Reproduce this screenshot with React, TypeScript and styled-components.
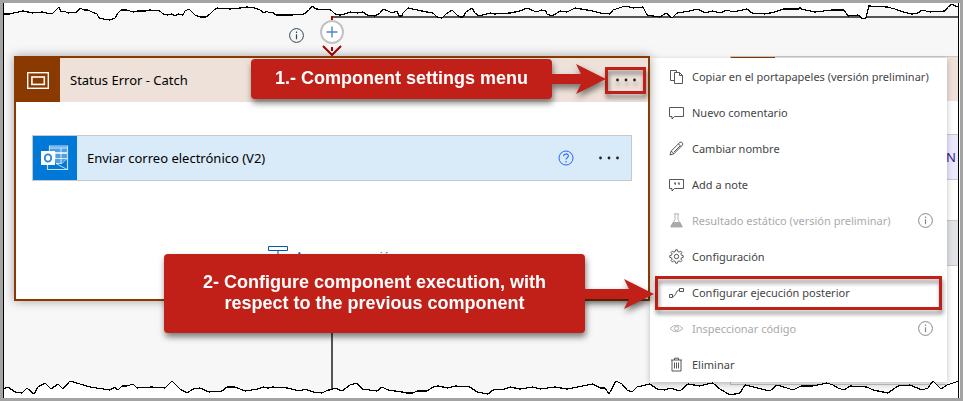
import React from "react";
import styled, { createGlobalStyle, css } from "styled-components";

const ui = `"Noto Sans", "Open Sans", "Liberation Sans", sans-serif`;
const red = "#c12018";
const brown = "#8a3a00";

const Global = createGlobalStyle`
  *, *::before, *::after { box-sizing: border-box; }
  body { margin: 0; font-family: ${ui}; font-size: 13px; color: #000; }
  button { font: inherit; color: inherit; background: none; border: 0; padding: 0; cursor: pointer; }
  svg { display: block; flex: none; }
`;

const Frame = styled.main`
  min-height: 100vh;
  display: flex;
  border: 3px solid #a3a3a3;
  padding-right: 1px;
  background: #fff;
`;

const Canvas = styled.div`
  position: relative;
  flex: 1;
  min-width: 0;
  display: flex;
  flex-direction: column;
  overflow: hidden;
  background: #f7f7f7;
  border: 0 solid #000;
  border-width: 0 1px;
`;

const TornEdge = styled.svg<{ $side: "top" | "bottom" }>`
  position: absolute;
  left: -1px;
  width: calc(100% + 2px);
  height: 20px;
  z-index: 5;
  pointer-events: none;
  ${(p) => (p.$side === "top" ? "top: 0;" : "bottom: 0;")}
`;

const Columns = styled.div`
  display: grid;
  grid-template-columns: 646fr 308fr;
`;

const TopStrip = styled(Columns)`
  height: 53px;
`;

const Inlet = styled.div`
  display: grid;
  grid-template-columns: 1fr 24px 1fr;
  column-gap: 16px;
  padding-left: 10px;
`;

const InfoButton = styled.button`
  justify-self: end;
  align-self: start;
  margin-top: 25px;
`;

const InletArrow = styled.div`
  position: relative;
  display: flex;
  flex-direction: column;
  align-items: center;
  padding-top: 13px;
  z-index: 2;
`;

const InletStub = styled.div`
  width: 2px;
  height: 4px;
  background: #a80000;
`;

const AddButton = styled.button`
  width: 24px;
  height: 24px;
  border: 2px solid #c3c3c3;
  border-radius: 50%;
  background: #fff;
  display: grid;
  place-items: center;
`;

const Wire = styled.div`
  align-self: start;
  height: 2px;
  margin-top: 13px;
  background: #555;
`;

const InletWire = styled(Wire)`
  margin: 13px 0 0 -28px;
`;

const ScopeColumn = styled.div`
  position: relative;
  z-index: 3;
  padding-left: 10px;
`;

const Scope = styled.section`
  position: relative;
  border: 2px solid ${brown};
  background: #fff;
  box-shadow: 0 0 10px rgba(0, 0, 0, 0.35);
`;

const ScopeHeader = styled.header`
  position: relative;
  display: flex;
  align-items: center;
  height: 44px;
  background: #eee1d9;
`;

const Tile = styled.span<{ $color: string }>`
  width: 44px;
  height: 44px;
  flex: none;
  display: grid;
  place-items: center;
  background: ${(p) => p.$color};
`;

const Title = styled.h2`
  flex: 1;
  margin: 0 10px;
  font-size: 13px;
  font-weight: 400;
  white-space: nowrap;
`;

const outlined = css`
  border: 3px solid ${red};
  filter: drop-shadow(1px 4px 2px rgba(0, 0, 0, 0.45));
`;

const MoreButton = styled.button<{ $outlined?: boolean }>`
  width: 41px;
  height: 27px;
  margin-right: 2px;
  display: grid;
  place-items: center;
  ${(p) => p.$outlined && outlined}
`;

const HelpButton = styled.button`
  margin-right: 14px;
`;

const ScopeBody = styled.div`
  padding: 33px 16px 0;
  height: 197px;
`;

const Action = styled.article`
  display: flex;
  align-items: center;
  height: 46px;
  border: 1px solid #c4c8cc;
  background: #d9eaf8;
`;

const AddAction = styled.button`
  display: flex;
  align-items: center;
  gap: 8px;
  height: 24px;
  margin: 62px auto 0;
  color: #0058ad;
  font-size: 11px;
`;

const Outlet = styled.div`
  width: 2px;
  height: 94px;
  margin: 0 auto;
  background: #555;
`;

const Callout = styled.div<{ $place: "header" | "body" }>`
  position: absolute;
  z-index: 4;
  display: flex;
  align-items: center;
  filter: drop-shadow(1px 4px 3px rgba(0, 0, 0, 0.5));
  ${(p) => (p.$place === "header" ? "top: 1px; right: 42px;" : "top: 196px; right: -6px;")}
`;

const CalloutText = styled.p<{ $wide?: boolean }>`
  margin: 0;
  padding: ${(p) => (p.$wide ? "18px 39px 19px" : "9px 24px 10px")};
  border-radius: 4px;
  background: ${red};
  color: #fff;
  font: 700 18px/21px "Liberation Sans", Arial, sans-serif;
  text-align: center;
  white-space: nowrap;
`;

const SideColumn = styled.div`
  position: relative;
`;

const BackCard = styled.section`
  margin-left: 80px;
  height: 329px;
  border: 1px solid #c8c8c8;
  border-right: 0;
  background: #fff;
`;

const BackHeader = styled.div`
  height: 44px;
  background: #eee1d9;
`;

const BackRow = styled.div<{ $color: string; $gap: number }>`
  height: 46px;
  margin-top: ${(p) => p.$gap}px;
  padding-right: 2px;
  border: 1px solid #c8c8c8;
  border-width: 1px 0;
  background: ${(p) => p.$color};
  color: #2c1d8c;
  line-height: 44px;
  text-align: right;
`;

const Menu = styled.ul`
  position: absolute;
  top: 2px;
  left: 0;
  right: 11px;
  z-index: 1;
  margin: 0;
  padding: 0;
  list-style: none;
  background: #fff;
  box-shadow: 0 2px 6px rgba(0, 0, 0, 0.25);
`;

const MenuItem = styled.li`
  position: relative;
`;

const MenuButton = styled.button`
  width: 100%;
  height: 36px;
  padding: 0 14px 0 19px;
  display: flex;
  align-items: center;
  gap: 8px;
  color: #444;
  font-size: 11px;
  text-align: left;
  white-space: nowrap;
  &:disabled {
    color: #aaa;
    cursor: default;
  }
`;

const MenuLabel = styled.span`
  flex: 1;
`;

const Highlight = styled.span`
  position: absolute;
  inset: 2px 5px 0 5px;
  pointer-events: none;
  ${outlined}
`;

const Info = ({ size = 15, color = "#888" }: { size?: number; color?: string }) => (
  <svg width={size} height={size} viewBox="0 0 15 15" fill="none" stroke={color}>
    <circle cx="7.5" cy="7.5" r="6.9" />
    <path d="M7.5 6.2v5M7.5 3.6v1.4" strokeWidth="1.2" />
  </svg>
);

const Dots = () => (
  <svg width="22" height="4" viewBox="0 0 22 4" fill="#222">
    <circle cx="2.5" cy="2" r="1.4" />
    <circle cx="11" cy="2" r="1.4" />
    <circle cx="19.5" cy="2" r="1.4" />
  </svg>
);

const ScopeIcon = () => (
  <svg width="22" height="17" viewBox="0 0 22 17" fill="none" stroke="#fff">
    <rect x=".7" y=".7" width="20.6" height="15.6" strokeWidth="1.4" />
    <rect x="4.9" y="5" width="12.4" height="7.4" strokeWidth="1.6" />
  </svg>
);

const OutlookIcon = () => (
  <svg width="28" height="26" viewBox="0 0 28 26" fill="none" stroke="#fff">
    <path d="M8.5 1h18v6.500h-18zM26.500 7v17.500h-20V18" strokeWidth="1.200" opacity=".75" />
    <path d="M9 3h17M14 7.500v6M20 3v15M9 8.500h17M14 13.500h12M15 18.500h6l5-5M15 18.500l11 6" opacity=".75" />
    <path d="M8.500 1.500h17.500v12l-6 4.500h-6z" fill="#fff" stroke="none" opacity=".3" />
    <rect x="0" y="6" width="14" height="14" fill="#fff" stroke="none" />
    <ellipse cx="7" cy="13" rx="3.200" ry="3.600" stroke="#2a88dc" strokeWidth="1.900" />
  </svg>
);

const Help = () => (
  <svg width="16" height="16" viewBox="0 0 16 16" fill="none" stroke="#2266ff">
    <circle cx="8" cy="8" r="7" />
    <path d="M5.700 6.200c0-3 4.700-3 4.700-.2 0 1.700-2.400 1.800-2.400 3.600M8 11v1.400" strokeWidth="1.100" />
  </svg>
);

const InsertIcon = () => (
  <svg width="20" height="18" viewBox="0 0 20 18" fill="none" stroke="#0058ad">
    <path d="M.5 .5h19v4H.5zM10 4.500v8M7 9.500l3 3 3-3M.5 13.500h19v4H.5z" />
  </svg>
);

const Arrow = ({ length }: { length: number }) => (
  <svg width={length} height="32" viewBox={`0 0 ${length} 32`} fill={red}>
    <path d={`M0 11H${length - 25}L${length - 30} 1L${length} 16L${length - 30} 31L${length - 25} 21H0z`} />
  </svg>
);

const icons: Record<string, React.ReactNode> = {
  copy: (
    <>
      <path d="M5 11.500H1.500V1.500h6v1.500" />
      <path d="M5.500 3.500h5l3 3v8h-8zM10.500 3.500v3h3" />
    </>
  ),
  comment: <path d="M.5 2.500h14v9H5.500l-2.500 2.500v-2.500H.5z" />,
  pencil: (
    <>
      <path d="M1 14l1.200-4L11 1.300q1.200-.6 2.200.4t.4 2.200L5 12.700z" />
      <path d="M9.500 3l2.600 2.600M2.200 10l2.800 2.700M5 11l6-6" />
    </>
  ),
  note: (
    <>
      <path d="M.5 2.500h14v9H5.500l-2.500 2.500v-2.500H.5z" />
      <path d="M5 6h1.800M6.300 6v1.700M8.800 6h1.800M10.100 6v1.700" strokeWidth="1.200" />
    </>
  ),
  flask: (
    <>
      <path d="M5 .9h5M6 1v5.500L2 13.500h11L9 6.500V1" />
      <path d="M4 9.500h7l2.300 4.500H1.700z" fill="currentColor" />
    </>
  ),
  gear: (
    <>
      <circle cx="7.500" cy="7.500" r="2.200" />
      <path d="M6.600 .8h1.800l.4 1.700 1.300.6 1.500-1 1.300 1.300-1 1.500.6 1.300 1.700.4v1.800l-1.700.4-.6 1.300 1 1.500-1.300 1.300-1.500-1-1.300.6-.4 1.700H6.600l-.4-1.700-1.300-.6-1.500 1-1.300-1.300 1-1.500-.6-1.300-1.700-.4V6.600l1.700-.4.6-1.300-1-1.500 1.300-1.300 1.500 1 1.300-.6z" />
    </>
  ),
  flow: <path d="M.5 9.500h3v3h-3zM10.500 3.500h4v3h-4zM3.500 11.500c4 0 3-6.500 7-6.500" />,
  eye: (
    <>
      <path d="M1 7.500q6.500-6.500 13 0q-6.500 6.500-13 0z" />
      <circle cx="7.500" cy="7.500" r="2" />
    </>
  ),
  trash: <path d="M2 3h11M5.500 3V1.200h4V3M3 3v11h9V3M5.500 5.500v6M7.500 5.500v6M9.500 5.500v6" />,
};

const items = [
  { icon: "copy", label: "Copiar en el portapapeles (versión preliminar)" },
  { icon: "comment", label: "Nuevo comentario" },
  { icon: "pencil", label: "Cambiar nombre" },
  { icon: "note", label: "Add a note" },
  { icon: "flask", label: "Resultado estático (versión preliminar)", disabled: true },
  { icon: "gear", label: "Configuración" },
  { icon: "flow", label: "Configurar ejecución posterior", highlighted: true },
  { icon: "eye", label: "Inspeccionar código", disabled: true },
  { icon: "trash", label: "Eliminar" },
];

const topTear =
  "0,11 7,11 11,10 20,8 25,9 29,10 39,9 44,10 47,11 50,10 53,7 56,4 58,9 61,8 65,10 74,9 77,5 81,7 85,7 89,9 94,11 96,15 100,16 107,17 112,15 115,10 118,7 124,7 130,9 135,8 142,8 147,7 157,8 160,11 164,12 169,11 172,13 175,11 180,12 182,8 186,6 189,9 192,12 197,14 203,14 207,11 211,7 214,5 227,6 237,5 244,4 252,5 257,7 261,10 264,8 266,10 269,9 273,12 290,12 294,11 297,12 301,11 306,7 309,3 313,6 328,7 332,11 337,12 342,11 347,9 355,10 360,9 364,12 372,13 377,10 380,6 385,8 389,10 394,8 396,13 399,13 400,10 405,5 414,7 424,9 430,10 434,14 439,15 443,11 449,7 454,12 457,14 460,14 463,9 469,5 472,10 476,13 487,10 492,11 507,10 517,8 524,5 531,8 534,9 538,7 543,8 544,11 549,13 554,10 557,8 564,9 572,5 590,8 597,10 607,11 610,7 619,4 623,3 630,5 640,4 644,12 650,13 657,14 663,10 669,15 674,10 687,8 695,6 702,10 710,8 717,10 724,7 730,9 744,6 749,10 762,11 772,9 780,6 796,6 797,4 798,6 807,8 812,9 829,7 841,7 845,13 855,12 860,16 863,15 866,3 884,4 892,6 900,9 909,11 915,10 919,7 927,9 942,8 945,4 949,1 952,3 956,4";
const bottomTear =
  "0,11 5,9 12,14 19,15 24,10 31,16 35,9 42,5 48,11 55,6 60,11 67,3 77,6 87,9 107,12 112,9 114,12 116,11 119,8 124,8 130,6 134,10 149,9 162,10 169,3 177,11 184,15 190,11 197,10 206,14 219,13 224,9 232,9 242,13 255,11 260,9 265,10 270,9 284,10 297,13 302,11 310,14 319,15 325,12 327,12 332,10 339,13 347,7 354,5 359,11 374,13 379,9 385,12 399,14 404,15 410,15 414,13 424,13 430,9 435,8 445,10 452,8 467,9 474,14 485,16 490,12 502,11 507,9 517,11 530,9 537,11 552,9 564,11 590,6 597,10 602,10 606,16 613,3 619,6 624,12 629,14 634,9 647,6 654,11 662,12 667,10 677,13 685,6 697,8 704,6 710,5 717,11 727,17 737,15 742,7 754,10 767,13 774,7 784,10 790,12 798,8 810,8 824,5 830,7 835,10 841,12 847,8 864,9 870,12 885,15 895,8 907,7 919,12 925,10 930,3 938,11 944,7 956,3";

const Tear = ({ side }: { side: "top" | "bottom" }) => {
  const points = side === "top" ? topTear : bottomTear;
  const edge = side === "top" ? -2 : 22;
  return (
    <TornEdge $side={side} viewBox="0 0 956 20" preserveAspectRatio="none" shapeRendering="crispEdges" aria-hidden>
      <polygon points={`-2,${edge} ${points} 958,${edge}`} fill="#fff" />
      <polyline points={points} fill="none" stroke="#000" strokeWidth="1.200" />
    </TornEdge>
  );
};

export default function App() {
  return (
    <Frame>
      <Global />
      <Canvas>
        <TopStrip>
          <Inlet>
            <InfoButton aria-label="Información">
              <Info color="#345" />
            </InfoButton>
            <InletArrow>
              <InletStub />
              <AddButton aria-label="Agregar">
                <svg width="12" height="12" viewBox="0 0 12 12" stroke="#4a87c8" strokeWidth="1.400">
                  <path d="M6 .5v11M.5 6h11" />
                </svg>
              </AddButton>
              <svg width="20" height="12" viewBox="0 0 20 12" fill="none" stroke="#a80000" strokeWidth="2">
                <path d="M1 2l9 9L19 2M10 3v4" />
              </svg>
            </InletArrow>
            <InletWire />
          </Inlet>
          <Wire />
        </TopStrip>
        <Columns>
          <ScopeColumn>
            <Scope>
              <ScopeHeader>
                <Tile $color={brown}>
                  <ScopeIcon />
                </Tile>
                <Title>Status Error - Catch</Title>
                <MoreButton $outlined aria-label="Menú del componente">
                  <Dots />
                </MoreButton>
              </ScopeHeader>
              <ScopeBody>
                <Action>
                  <Tile $color="#0078d7">
                    <OutlookIcon />
                  </Tile>
                  <Title>Enviar correo electrónico (V2)</Title>
                  <HelpButton aria-label="Ayuda">
                    <Help />
                  </HelpButton>
                  <MoreButton aria-label="Más opciones">
                    <Dots />
                  </MoreButton>
                </Action>
                <AddAction>
                  <InsertIcon />
                  Agregar una acción
                </AddAction>
              </ScopeBody>
              <Callout $place="header">
                <CalloutText>1.- Component settings menu</CalloutText>
                <Arrow length={54} />
              </Callout>
              <Callout $place="body">
                <CalloutText $wide>
                  2- Configure component execution, with
                  <br />
                  respect to the previous component
                </CalloutText>
                <Arrow length={69} />
              </Callout>
            </Scope>
            <Outlet />
          </ScopeColumn>
          <SideColumn>
            <BackCard>
              <BackHeader>
                <Tile as="div" $color={brown} />
              </BackHeader>
              <BackRow $color="#ebe7fd" $gap={33}>
                N
              </BackRow>
              <BackRow $color="#e1e3e6" $gap={40} />
            </BackCard>
            <Menu>
              {items.map((item) => (
                <MenuItem key={item.icon}>
                  <MenuButton disabled={item.disabled}>
                    <svg width="15" height="15" viewBox="0 0 15 15" fill="none" stroke="currentColor" strokeWidth=".9">
                      {icons[item.icon]}
                    </svg>
                    <MenuLabel>{item.label}</MenuLabel>
                    {item.disabled && <Info />}
                  </MenuButton>
                  {item.highlighted && <Highlight />}
                </MenuItem>
              ))}
            </Menu>
          </SideColumn>
        </Columns>
        <Tear side="top" />
        <Tear side="bottom" />
      </Canvas>
    </Frame>
  );
}
